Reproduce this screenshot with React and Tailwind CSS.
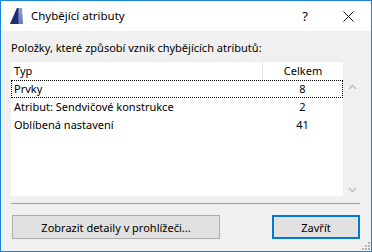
import React from "react";

const font = { fontFamily: '"Noto Sans", "Open Sans", sans-serif' };

function AppIcon() {
  return (
    <svg width="13" height="16" viewBox="0 0 13 16">
      <defs>
        <linearGradient id="g1" x1="0" y1="0" x2="1" y2="1">
          <stop offset="0" stopColor="#b4c2e6" />
          <stop offset="1" stopColor="#5d74b8" />
        </linearGradient>
      </defs>
      <polygon points="0,16 7,0 12,0 13,16" fill="url(#g1)" />
      <polygon points="0,16 7,0 8.5,0 8.5,16" fill="#1c2f78" />
    </svg>
  );
}

const rows = [
  ["Prvky", "8"],
  ["Atribut: Sendvičové konstrukce", "2"],
  ["Oblíbená nastavení", "41"],
];

export default function App() {
  return (
    <div
      className="w-[372px] h-[252px] border border-[#1883d7] bg-[#f0f0f0] flex flex-col text-[11px] text-black relative overflow-hidden"
      style={font}
    >
      <div className="h-[30px] bg-white flex items-center shrink-0">
        <div className="ml-[9px] w-[13px] flex items-center">
          <AppIcon />
        </div>
        <div className="ml-[8px] text-[11.5px] flex-1 leading-none pb-[1px]">Chybějící atributy</div>
        <div className="w-[20px] text-center text-[13px] leading-none mr-[28px]">?</div>
        <svg width="11" height="11" viewBox="0 0 11 11" className="mr-[17px]">
          <path d="M0.5 0.5 L10.5 10.5 M10.5 0.5 L0.5 10.5" stroke="#111" strokeWidth="1" />
        </svg>
      </div>

      <div className="px-[10px] flex flex-col flex-1">
        <div className="mt-[9px] h-[15px] leading-[15px]">Položky, které způsobí vznik chybějících atributů:</div>

        <div className="mt-[7px] h-[134px] w-[350px] flex bg-white">
          <div className="flex-1 flex flex-col">
            <div className="h-[18px] flex leading-[18px]">
              <div className="w-[252px] pl-[3px] border-r border-[#e5e5e5]">Typ</div>
              <div className="flex-1 text-center">Celkem</div>
            </div>
            {rows.map(([a, b], i) => (
              <div
                key={i}
                className={
                  "h-[18px] flex leading-[16px] border " +
                  (i === 0 ? "border-dotted border-black" : "border-transparent")
                }
              >
                <div className="w-[251px] pl-[2px]">{a}</div>
                <div className="flex-1 text-center">{b}</div>
              </div>
            ))}
          </div>
          <div className="w-[18px] bg-[#f0f0f0] flex flex-col items-center justify-between pt-[22px] pb-[3px]">
            <svg width="9" height="6" viewBox="0 0 9 6">
              <path d="M1 5 L4.5 1.5 L8 5" fill="none" stroke="#c2c2c2" strokeWidth="1.6" />
            </svg>
            <svg width="9" height="6" viewBox="0 0 9 6">
              <path d="M1 1 L4.5 4.5 L8 1" fill="none" stroke="#c2c2c2" strokeWidth="1.6" />
            </svg>
          </div>
        </div>

        <div className="mt-[7px] h-px w-[349px] bg-[#a0a0a0]" />

        <div className="mt-[11px] flex justify-between w-[349px]">
          <button className="ml-[1px] w-[208px] h-[24px] bg-[#e1e1e1] border border-[#adadad] text-[11px] leading-none" style={font}>
            Zobrazit detaily v prohlížeči...
          </button>
          <button className="w-[88px] h-[24px] bg-[#e1e1e1] border-2 border-[#0078d7] text-[11px] leading-none" style={font}>
            Zavřít
          </button>
        </div>
      </div>

      <svg width="8" height="8" viewBox="0 0 8 8" className="absolute right-[1px] bottom-[1px]">
        <rect x="6" y="0" width="2" height="2" fill="#b4b4b4" />
        <rect x="3" y="3" width="2" height="2" fill="#b4b4b4" />
        <rect x="6" y="3" width="2" height="2" fill="#b4b4b4" />
        <rect x="0" y="6" width="2" height="2" fill="#b4b4b4" />
        <rect x="3" y="6" width="2" height="2" fill="#b4b4b4" />
        <rect x="6" y="6" width="2" height="2" fill="#b4b4b4" />
      </svg>
    </div>
  );
}
